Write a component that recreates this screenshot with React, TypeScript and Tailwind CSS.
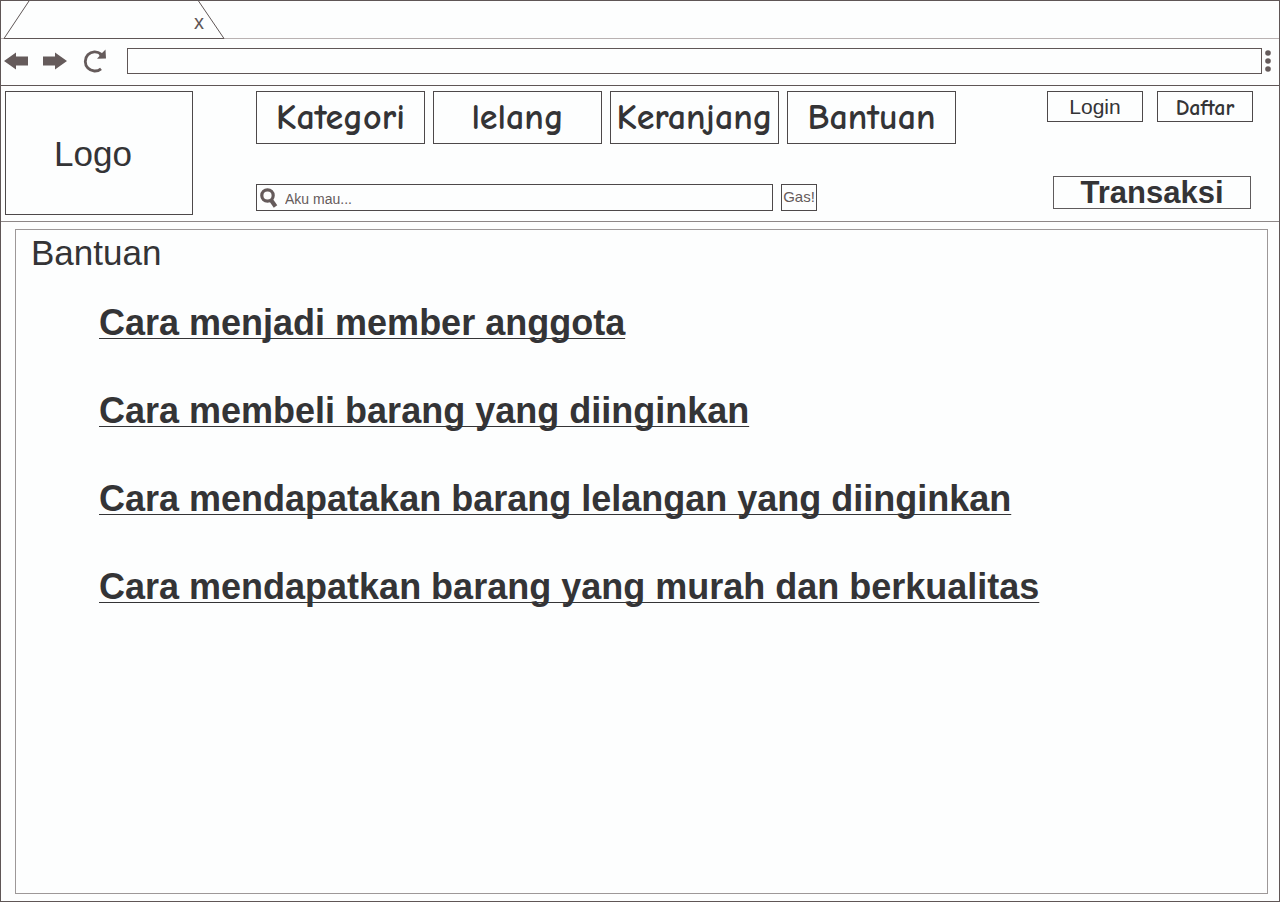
import React from "react";

const categories = ["Kategori", "lelang", "Keranjang", "Bantuan"];

const topics = [
  "Cara menjadi member anggota",
  "Cara membeli barang yang diinginkan",
  "Cara mendapatakan barang lelangan yang diinginkan",
  "Cara mendapatkan barang yang murah dan berkualitas",
];

const handwritten =
  "font-['Comic_Sans_MS','Comic_Neue','Noto_Sans',sans-serif] font-bold [font-variant-ligatures:none]";

function TabStrip() {
  return (
    <div className="relative h-[38px] border-b border-[#b9b2b2]">
      <svg className="absolute left-0 top-0 h-[38px] w-[226px]" viewBox="0 0 226 38" fill="none" stroke="#5f5656" aria-hidden="true">
        <path d="M3 37.500 28 0M197.500 0 223 37.500M3 37.500H223" />
      </svg>
      <div className="flex h-full w-[206px] items-center justify-end pt-1">
        <button type="button" aria-label="Tutup tab" className="relative w-4 text-center text-xl leading-5 text-[#5f5656]">
          x
        </button>
      </div>
    </div>
  );
}

function Toolbar() {
  return (
    <div className="flex h-[47px] items-center border-b border-[#5f5656] pb-[2px] pl-[3px] pr-2 text-[#655b5b]">
      <button type="button" aria-label="Kembali">
        <svg className="h-[18px] w-6" viewBox="0 0 24 18" fill="currentColor">
          <path d="M0 9 12 0.500V4.500H24V13.500H12V17.500Z" />
        </svg>
      </button>
      <button type="button" aria-label="Maju" className="ml-[15px]">
        <svg className="h-[18px] w-6" viewBox="0 0 24 18" fill="currentColor">
          <path d="M24 9 12 0.500V4.500H0V13.500H12V17.500Z" />
        </svg>
      </button>
      <button type="button" aria-label="Muat ulang" className="ml-4">
        <svg className="h-6 w-6" viewBox="0 0 24 24" fill="none">
          <path d="M18 19.800A9.600 9.600 0 1 1 18 5" stroke="currentColor" strokeWidth="2.800" />
          <path d="M22.500 0.500 23 9.500 14 9.700 16.500 7 15.500 4.500 19 4Z" fill="currentColor" />
        </svg>
      </button>
      <input
        type="text"
        aria-label="Alamat"
        className="ml-5 h-[26px] min-w-0 flex-1 border border-[#5f5656] bg-transparent px-2 text-sm outline-none"
      />
      <button type="button" aria-label="Menu" className="ml-[3px]">
        <svg className="h-6 w-[6px]" viewBox="0 0 6 24" fill="currentColor">
          <circle cx="3" cy="4" r="2.800" />
          <circle cx="3" cy="12" r="2.800" />
          <circle cx="3" cy="20" r="2.800" />
        </svg>
      </button>
    </div>
  );
}

function Header() {
  return (
    <header className="flex h-[136px] border-b border-[#8d8787] pl-1 pr-[26px] pt-[5px]">
      <a href="#" className="flex h-[124px] w-[188px] shrink-0 items-center border border-[#4d494a] pl-12 pt-[2px] text-[35px] leading-10">
        Logo
      </a>
      <div className="ml-[63px] flex flex-col">
        <nav className="flex gap-2">
          {categories.map((name) => (
            <a
              key={name}
              href="#"
              className={`flex h-[53px] w-[169px] items-center justify-center border border-[#4d494a] text-4xl ${handwritten}`}
            >
              {name}
            </a>
          ))}
        </nav>
        <form className="mt-10 flex gap-2" onSubmit={(e) => e.preventDefault()}>
          <label className="flex h-[27px] w-[517px] items-center border border-[#4d494a] pl-[3px] text-[#655b5b]">
            <svg className="h-5 w-[18px] shrink-0" viewBox="0 0 18 20" fill="none" stroke="currentColor" role="img" aria-label="Cari">
              <circle cx="7.500" cy="7.500" r="5.700" strokeWidth="3.200" />
              <path d="M11 12 15.500 18.500" strokeWidth="4.200" />
            </svg>
            <input
              type="text"
              placeholder="Aku mau..."
              className="ml-[7px] mt-[3px] min-w-0 flex-1 bg-transparent text-sm outline-none placeholder:text-[#655b5b]"
            />
          </label>
          <button type="submit" className="h-[27px] w-9 border border-[#4d494a] text-[15px] text-[#655b5b]">
            Gas!
          </button>
        </form>
      </div>
      <div className="ml-auto flex flex-col items-end">
        <div className="flex gap-[14px]">
          <button type="button" className="h-[31px] w-24 border border-[#4d494a] text-[21px] leading-7">
            Login
          </button>
          <button type="button" className={`h-[31px] w-24 border border-[#4d494a] pt-[2px] text-[22px] leading-7 ${handwritten}`}>
            Daftar
          </button>
        </div>
        <button type="button" className="mt-[54px] mr-[2px] h-[33px] w-[198px] border border-[#5f5b5c] text-[31px] font-bold leading-[30px]">
          Transaksi
        </button>
      </div>
    </header>
  );
}

export default function App() {
  return (
    <div className="flex min-h-screen flex-col border border-[#5f5656] bg-[#fdfefe] font-['Liberation_Sans',Arial,sans-serif] text-[#343436]">
      <TabStrip />
      <Toolbar />
      <Header />
      <main className="flex flex-1 flex-col pb-[7px] pl-[14px] pr-[11px] pt-[7px]">
        <section className="flex-1 border border-[#9d9898] pl-[15px] pt-[3px]">
          <h1 className="text-[35px] leading-10">Bantuan</h1>
          <ul className="mt-[30px] flex flex-col gap-12 pl-[68px]">
            {topics.map((topic) => (
              <li key={topic} className="h-10 text-4xl font-bold">
                <a href="#" className="underline decoration-1 underline-offset-[3px] [text-decoration-skip-ink:none]">
                  {topic}
                </a>
              </li>
            ))}
          </ul>
        </section>
      </main>
    </div>
  );
}
